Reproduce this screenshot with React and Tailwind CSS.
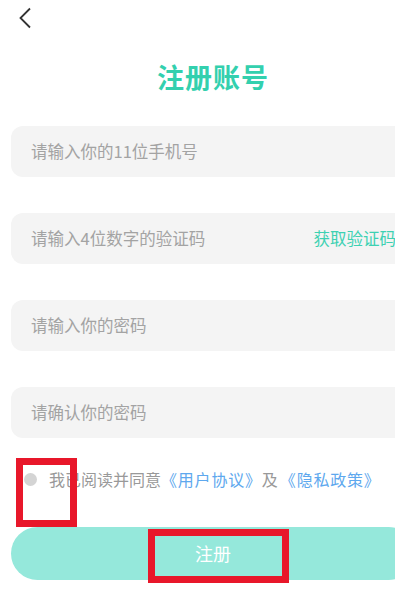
import { useState } from "react";

const fields = [
  { placeholder: "请输入你的11位手机号", type: "tel" },
  { placeholder: "请输入4位数字的验证码", type: "text", code: true },
  { placeholder: "请输入你的密码", type: "password" },
  { placeholder: "请确认你的密码", type: "password" },
];

export default function App() {
  const [agreed, setAgreed] = useState(false);

  return (
    <div
      className="relative w-[405px] h-[599px] bg-white overflow-hidden"
      style={{ fontFamily: '"Noto Sans CJK SC", "Noto Sans", sans-serif' }}
    >
      <div className="w-[395px] h-full overflow-hidden">
        <div className="w-[426px] px-[11px]">
          {/* back */}
          <div className="h-[36px] pl-[7px] pt-[7px]">
            <svg width="14" height="22" viewBox="0 0 14 22" fill="none">
              <path d="M12 1.5 L2.5 11 L12 20.5" stroke="#333" strokeWidth="1.8" />
            </svg>
          </div>

          <h1 className="mt-[23px] text-center text-[27px] leading-[36px] font-bold text-[#33d0ae] tracking-[1px]">
            注册账号
          </h1>

          <div className="mt-[31px] flex flex-col gap-[36px]">
            {fields.map((f, i) => (
              <div
                key={i}
                className="h-[51px] rounded-[12px] bg-[#f4f4f4] flex items-center pl-[20px] pr-[19px]"
              >
                <input
                  type={f.type}
                  placeholder={f.placeholder}
                  className="flex-1 min-w-0 bg-transparent outline-none text-[16.5px] text-[#333] placeholder:text-[#a3a3a3]"
                />
                {f.code && (
                  <span className="text-[16.5px] text-[#3dd1b2] whitespace-nowrap">获取验证码</span>
                )}
              </div>
            ))}
          </div>

          <div className="mt-[22px] flex items-center h-[38px] pl-[13px]">
            <button
              onClick={() => setAgreed(!agreed)}
              className={
                agreed
                  ? "w-[13px] h-[13px] rounded-full bg-[#33d0ae]"
                  : "w-[13px] h-[13px] rounded-full bg-[#d4d4d4]"
              }
            />
            <p className="ml-[12px] text-[16px] text-[#999] whitespace-nowrap">
              我已阅读并同意
              <span className="text-[#5ea8ee] tracking-[0.8px]">《用户协议》</span>及
              <span className="text-[#5ea8ee] tracking-[0.8px] ml-[2px]">《隐私政策》</span>
            </p>
          </div>

          <button className="mt-[29px] w-full h-[53px] rounded-full bg-[#95e8db] text-white text-[18px]">
            注册
          </button>
        </div>
      </div>

      {/* red annotation boxes */}
      <div className="absolute left-[16px] top-[458px] w-[61px] h-[69px] border-[7px] border-[#e8172a]" />
      <div className="absolute left-[148px] top-[529px] w-[141px] h-[54px] border-[7px] border-[#e8172a]" />
    </div>
  );
}
